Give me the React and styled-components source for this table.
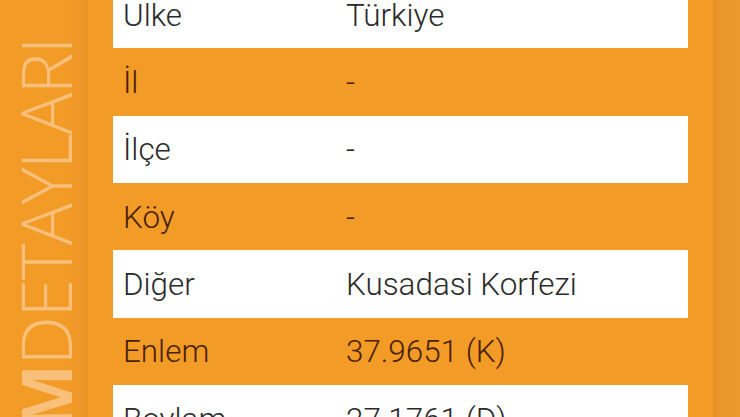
import React from "react";
import styled, { createGlobalStyle } from "styled-components";

const Global = createGlobalStyle`
  html, body { margin: 0; padding: 0; }
  body { background: #f29b27; overflow: hidden; }
  #root { width: 740px; height: 417px; overflow: hidden; }
`;

const Page = styled.div`
  display: flex;
  width: 740px;
  height: 417px;
  background: #f29b27;
  overflow: hidden;
  font-family: Roboto, "Open Sans", sans-serif;
`;

const Sidebar = styled.aside`
  width: 88px;
  flex: none;
  display: flex;
  flex-direction: column;
  align-items: flex-start;
  padding-top: 38px;
  padding-left: 10px;
  box-sizing: border-box;
  background: linear-gradient(to right, #f29b27 0%, #f29b27 78%, #e99428 100%);
  overflow: hidden;
`;

const SideTitle = styled.div`
  writing-mode: vertical-rl;
  transform: rotate(180deg);
  font-family: "Open Sans", Roboto, sans-serif;
  font-weight: 300;
  font-size: 70px;
  line-height: 1;
  letter-spacing: -1.5px;
  color: #f8c07a;
  white-space: nowrap;
  flex: none;
`;

const Bold = styled.span`
  font-weight: 700;
`;

const Main = styled.main`
  flex: 1;
  display: flex;
  padding-left: 25px;
  gap: 25px;
`;

const List = styled.div`
  width: 575px;
  margin-top: -19px;
  display: flex;
  flex-direction: column;
  flex: none;
`;

const Row = styled.div`
  height: 67.33px;
  flex: none;
  display: grid;
  grid-template-columns: 223px 1fr;
  align-items: center;
  padding-left: 10px;
  box-sizing: border-box;
  background: ${(p) => (p.$white ? "#ffffff" : "transparent")};
  color: ${(p) => (p.$white ? "#2a2a2a" : "#4a1f00")};
  font-size: 31.4px;
  font-weight: 300;
`;

const Cell = styled.span`
  white-space: nowrap;
  padding-top: 1px;
`;

const RightStrip = styled.div`
  flex: 1;
  background: linear-gradient(to right, #e48e27 0px, #eb9629 8px, #ed982a 100%);
`;

const rows = [
  ["Ulke", "Türkiye"],
  ["İl", "-"],
  ["İlçe", "-"],
  ["Köy", "-"],
  ["Diğer", "Kusadasi Korfezi"],
  ["Enlem", "37.9651 (K)"],
  ["Boylam", "27.1761 (D)"],
];

export default function App() {
  return (
    <>
      <Global />
      <Page>
        <Sidebar>
          <SideTitle>
            <Bold>EM</Bold>DETAYLARI
          </SideTitle>
        </Sidebar>
        <Main>
          <List>
            {rows.map(([k, v], i) => (
              <Row key={k} $white={i % 2 === 0}>
                <Cell>{k}</Cell>
                <Cell>{v}</Cell>
              </Row>
            ))}
          </List>
          <RightStrip />
        </Main>
      </Page>
    </>
  );
}
